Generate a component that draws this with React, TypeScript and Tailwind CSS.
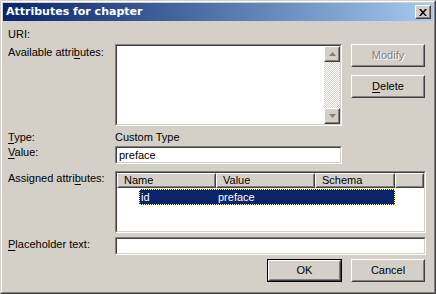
import React from "react";

const font = { fontFamily: '"Liberation Sans", Arial, sans-serif' };

function Sunken({ className = "", children }: { className?: string; children?: React.ReactNode }) {
  return (
    <div className={`border border-t-[#808080] border-l-[#808080] border-b-white border-r-white ${className}`}>
      <div className="w-full h-full border border-t-[#404040] border-l-[#404040] border-b-[#d4d0c8] border-r-[#d4d0c8] bg-white overflow-hidden">
        {children}
      </div>
    </div>
  );
}

function Raised({ className = "", children, inner = "" }: { className?: string; children?: React.ReactNode; inner?: string }) {
  return (
    <div className={`border border-t-white border-l-white border-b-[#404040] border-r-[#404040] bg-[#d4d0c8] ${className}`}>
      <div className={`w-full h-full border border-t-[#d4d0c8] border-l-[#d4d0c8] border-b-[#808080] border-r-[#808080] flex items-center justify-center ${inner}`}>
        {children}
      </div>
    </div>
  );
}

function U({ children }: { children: React.ReactNode }) {
  return <span className="underline underline-offset-[2px]">{children}</span>;
}

function Arrow({ up }: { up?: boolean }) {
  return (
    <svg width="7" height="4" viewBox="0 0 7 4" className="block">
      {up ? <polygon points="3.5,0 7,4 0,4" fill="#808080" /> : <polygon points="0,0 7,0 3.5,4" fill="#808080" />}
    </svg>
  );
}

export default function App() {
  return (
    <div className="w-[436px] h-[294px] bg-[#d4d0c8] text-[11px] leading-[13px] text-black" style={font}>
      <div className="w-full h-full border border-t-[#d4d0c8] border-l-[#d4d0c8] border-b-[#404040] border-r-[#404040]">
        <div className="w-full h-full border border-t-white border-l-white border-b-[#808080] border-r-[#808080] p-px flex flex-col">
          {/* Title bar */}
          <div className="h-[18px] shrink-0 bg-gradient-to-r from-[#0a246a] to-[#a6caf0] flex items-center pl-[3px] pr-[2px]">
            <span className="text-white font-bold text-[11px] leading-[14px] flex-1 font-['DejaVu_Sans',sans-serif]">Attributes for chapter</span>
            <Raised className="w-[16px] h-[14px]">
              <svg width="8" height="7" viewBox="0 0 8 7">
                <path d="M0 0h2l2 2.5L6 0h2L5 3.5L8 7H6L4 4.5L2 7H0l3-3.5z" fill="#000" />
              </svg>
            </Raised>
          </div>

          {/* Content */}
          <div className="flex flex-col pl-[5px] pr-[7px] pt-[7px]">
            <div className="h-[13px]">URI:</div>

            <div className="flex mt-[3px] h-[82px]">
              <div className="w-[107px] pt-[2px]">
                Available attri<U>b</U>utes:
              </div>
              <Sunken className="w-[227px] h-[82px]">
                <div className="flex justify-end h-full">
                  <div className="w-[16px] h-full flex flex-col bg-[repeating-conic-gradient(#d4d0c8_0_25%,#ffffff_0_50%)] bg-[length:2px_2px]">
                    <Raised className="w-[16px] h-[16px]"><Arrow up /></Raised>
                    <div className="flex-1" />
                    <Raised className="w-[16px] h-[16px]"><Arrow /></Raised>
                  </div>
                </div>
              </Sunken>
              <div className="ml-[9px] flex flex-col">
                <Raised className="w-[74px] h-[23px]">
                  <span className="text-[#808080] [text-shadow:1px_1px_0_#fff]">Modify</span>
                </Raised>
                <Raised className="w-[74px] h-[23px] mt-[8px]">
                  <span><U>D</U>elete</span>
                </Raised>
              </div>
            </div>

            <div className="flex mt-[5px] h-[13px]">
              <div className="w-[107px]"><U>T</U>ype:</div>
              <div>Custom Type</div>
            </div>

            <div className="flex mt-[2px] h-[18px]">
              <div className="w-[107px]"><U>V</U>alue:</div>
              <Sunken className="w-[227px] h-[18px]">
                <div className="pl-[2px] leading-[14px]">preface</div>
              </Sunken>
            </div>

            <div className="flex mt-[7px] h-[62px]">
              <div className="w-[107px] pt-[1px]">
                Assigned attri<U>b</U>utes:
              </div>
              <div className="w-[311px] h-[62px] border border-t-[#808080] border-l-[#808080] border-b-white border-r-white">
                <div className="w-full h-full border border-t-[#404040] border-l-[#404040] border-b-[#d4d0c8] border-r-[#d4d0c8] bg-white flex flex-col overflow-hidden">
                  <div className="flex h-[15px] shrink-0">
                    <Raised className="w-[99px] h-[15px]" inner="!justify-start pl-[5px]"><span>Name</span></Raised>
                    <Raised className="w-[99px] h-[15px]" inner="!justify-start pl-[5px]"><span>Value</span></Raised>
                    <Raised className="w-[80px] h-[15px]" inner="!justify-start pl-[5px]"><span>Schema</span></Raised>
                    <Raised className="flex-1 h-[15px]" />
                  </div>
                  <div className="flex mt-[1px] pl-[22px]">
                    <div className="w-[256px] h-[16px] bg-[#0a246a] text-white border border-dotted border-[#ffff80] flex items-center">
                      <span className="w-[78px] pl-[1px]">id</span>
                      <span>preface</span>
                    </div>
                  </div>
                </div>
              </div>
            </div>

            <div className="flex mt-[4px] h-[18px]">
              <div className="w-[107px] pt-[1px]"><U>P</U>laceholder text:</div>
              <Sunken className="w-[311px] h-[18px]" />
            </div>

            <div className="flex justify-end mt-[4px] pr-[1px]">
              <div className="border border-black">
                <Raised className="w-[73px] h-[21px]"><span>OK</span></Raised>
              </div>
              <Raised className="w-[74px] h-[23px] ml-[9px]"><span>Cancel</span></Raised>
            </div>
          </div>
        </div>
      </div>
    </div>
  );
}
